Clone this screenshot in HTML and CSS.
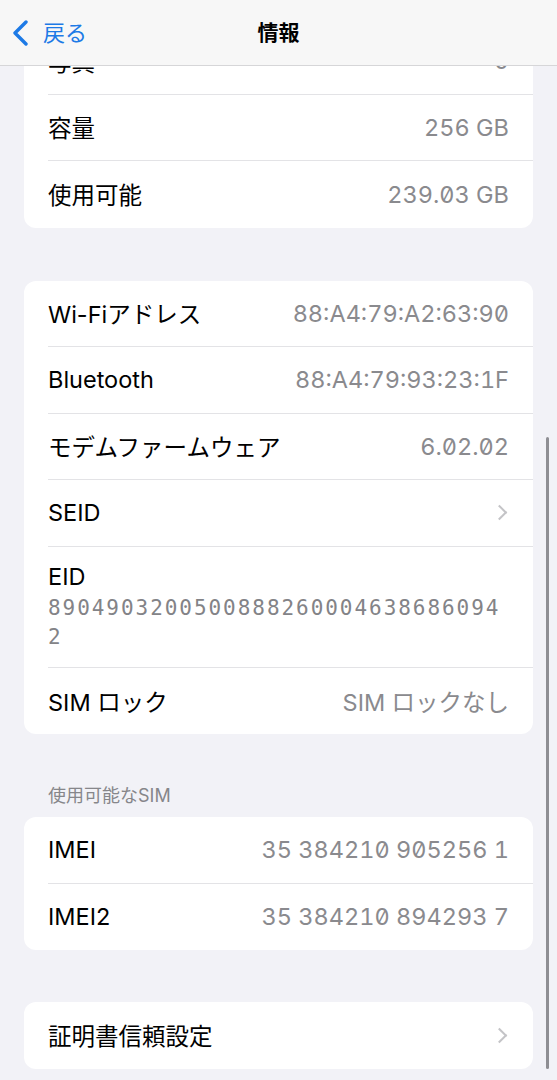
FILE: index.html
```html
<!DOCTYPE html>
<html lang="ja">
<head>
    <meta charset="UTF-8">
    <meta name="viewport" content="width=device-width, initial-scale=1.0">
    <title>情報</title>
    <link rel="stylesheet" href="styles.css">
</head>
<body>
    <header class="navbar">
        <a class="back" href="#">
            <svg class="back-chevron" width="20" height="26" viewBox="0 0 20 26">
                <path d="M15 2 L4 13 L15 24" fill="none" stroke="currentColor" stroke-width="3.4" stroke-linecap="round" stroke-linejoin="round"/>
            </svg>
            <span>戻る</span>
        </a>
        <h1 class="title">情報</h1>
    </header>

    <main class="content">
        <section class="group">
            <div class="row"><span class="label">写真</span><span class="value">0</span></div>
            <div class="row"><span class="label">容量</span><span class="value">256 GB</span></div>
            <div class="row"><span class="label">使用可能</span><span class="value">239.03 GB</span></div>
        </section>

        <section class="group">
            <div class="row"><span class="label">Wi-Fiアドレス</span><span class="value">88:A4:79:A2:63:90</span></div>
            <div class="row"><span class="label">Bluetooth</span><span class="value">88:A4:79:93:23:1F</span></div>
            <div class="row"><span class="label">モデムファームウェア</span><span class="value">6.02.02</span></div>
            <div class="row link"><span class="label">SEID</span><span class="chevron"></span></div>
            <div class="row stacked">
                <span class="label">EID</span>
                <span class="mono">89049032005008882600046386860942</span>
            </div>
            <div class="row"><span class="label">SIM ロック</span><span class="value">SIM ロックなし</span></div>
        </section>

        <h2 class="group-header">使用可能なSIM</h2>
        <section class="group tight">
            <div class="row"><span class="label">IMEI</span><span class="value">35 384210 905256 1</span></div>
            <div class="row"><span class="label">IMEI2</span><span class="value">35 384210 894293 7</span></div>
        </section>

        <section class="group">
            <div class="row link"><span class="label">証明書信頼設定</span><span class="chevron"></span></div>
        </section>
    </main>

    <div class="scrollbar"></div>
</body>
</html>
```

FILE: styles.css
```css
body {
    margin: 0;
    background-color: #f2f2f7;
    font-family: Inter, 'Noto Sans CJK JP', sans-serif;
    color: #000;
    overflow: hidden;
}

.navbar {
    position: fixed;
    top: 0;
    left: 0;
    right: 0;
    height: 65px;
    background-color: #f7f7f7;
    border-bottom: 1px solid #d6d6d8;
    display: flex;
    align-items: center;
    justify-content: center;
    z-index: 2;
}

.back {
    position: absolute;
    left: 11px;
    top: 20px;
    display: flex;
    align-items: center;
    gap: 12px;
    color: #1d7ae6;
    text-decoration: none;
    font-size: 22px;
    line-height: 26px;
}

.title {
    margin: 0;
    font-size: 21px;
    font-weight: 700;
    line-height: 26px;
}

.content {
    padding: 28px 24px 0 24px;
}

.group {
    background-color: #fff;
    border-radius: 12px;
    margin-bottom: 53px;
    overflow: hidden;
}

.group.tight {
    margin-bottom: 52px;
}

.row {
    box-sizing: border-box;
    height: 66.5px;
    margin-left: 24px;
    padding-right: 24px;
    display: flex;
    align-items: center;
    justify-content: space-between;
    border-bottom: 1px solid #e3e3e6;
    font-size: 23.5px;
}

.row:last-child {
    border-bottom: none;
}

.label {
    white-space: nowrap;
}

.value {
    color: #8a8a8e;
    font-variant-numeric: tabular-nums slashed-zero;
    font-feature-settings: "tnum", "zero";
    white-space: nowrap;
}

.chevron {
    width: 9px;
    height: 9px;
    margin-right: 4px;
    border-top: 2px solid #c4c4c7;
    border-right: 2px solid #c4c4c7;
    transform: rotate(45deg);
}

.row.stacked {
    height: 121px;
    flex-direction: column;
    align-items: flex-start;
    justify-content: flex-start;
    padding-top: 17px;
}

.row.stacked .label {
    line-height: 26px;
}

.mono {
    margin-top: 4px;
    width: 100%;
    font-family: 'DejaVu Sans Mono', monospace;
    font-size: 21px;
    letter-spacing: 1.95px;
    line-height: 29px;
    color: #838387;
    word-break: break-all;
}

.group-header {
    margin: -2px 0 10px 24px;
    font-size: 18px;
    font-weight: 400;
    line-height: 22px;
    color: #86868a;
}

.scrollbar {
    position: fixed;
    right: 8px;
    top: 437px;
    width: 3px;
    height: 632px;
    border-radius: 2px;
    background-color: #8e8e93;
}
```
